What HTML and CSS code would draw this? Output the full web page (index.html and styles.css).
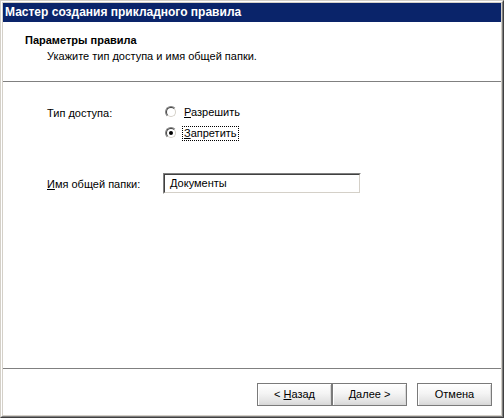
FILE: index.html
```html
<!DOCTYPE html>
<html lang="ru">
<head>
<meta charset="utf-8">
<title>Мастер создания прикладного правила</title>
<link rel="stylesheet" href="styles.css">
</head>
<body>
<div class="window">
  <div class="frame">
    <div class="titlebar">Мастер создания прикладного правила</div>
    <div class="client">
      <div class="header">
        <div class="h-title">Параметры правила</div>
        <div class="h-sub">Укажите тип доступа и имя общей папки.</div>
      </div>
      <div class="etch"></div>
      <div class="content">
        <div class="row row-access">
          <div class="label">Тип доступа:</div>
          <div class="radios">
            <div class="radio-item">
              <span class="radio"><span class="radio-in"></span></span>
              <span class="rlabel"><u>Р</u>азрешить</span>
            </div>
            <div class="radio-item">
              <span class="radio"><span class="radio-in"><span class="dot"></span></span></span>
              <span class="rlabel focus"><u>З</u>апретить</span>
            </div>
          </div>
        </div>
        <div class="row row-folder">
          <div class="label"><u>И</u>мя общей папки:</div>
          <div class="field"><div class="field-in">Документы</div></div>
        </div>
      </div>
      <div class="etch"></div>
      <div class="footer">
        <div class="btn"><span>&lt; <u>Н</u>азад</span></div>
        <div class="btn"><span><u>Д</u>алее &gt;</span></div>
        <div class="btn btn-cancel"><span>Отмена</span></div>
      </div>
    </div>
  </div>
</div>
</body>
</html>
```
FILE: styles.css
```css
* { box-sizing: border-box; }
html, body { margin: 0; padding: 0; }
body {
  width: 504px;
  height: 418px;
  font-family: "Liberation Sans", Arial, sans-serif;
  font-size: 11px;
  color: #000;
  background: #D4D0C8;
}
u { text-decoration: underline; text-underline-offset: 1px; }
.window {
  width: 504px;
  height: 418px;
  border: 1px solid;
  border-color: #D4D0C8 #404040 #404040 #D4D0C8;
}
.frame {
  height: 100%;
  border: 1px solid;
  border-color: #FFFFFF #808080 #808080 #FFFFFF;
  padding: 1px;
  background: #D4D0C8;
  display: flex;
  flex-direction: column;
}
.titlebar {
  height: 19px;
  background: #0A246A;
  color: #fff;
  font-weight: bold;
  font-size: 12px;
  line-height: 19px;
  padding-left: 2px;
  white-space: nowrap;
}
.client {
  flex: 1;
  background: #fff;
  display: flex;
  flex-direction: column;
}
.header {
  height: 59px;
  padding: 11px 0 0 22px;
}
.h-title { font-weight: bold; line-height: 14px; }
.h-sub { padding-left: 22px; line-height: 14px; margin-top: 2px; }
.etch {
  height: 2px;
  border-top: 1px solid #808080;
  border-bottom: 1px solid #fff;
}
.content {
  flex: 1;
  padding: 22px 0 0 44px;
}
.row { display: flex; }
.label { width: 116px; line-height: 14px; }
.row-access .label { padding-top: 1px; }
.radios { display: flex; flex-direction: column; gap: 7px; }
.radio-item { display: flex; align-items: center; height: 14px; padding-left: 2px; }
.radio {
  width: 12px;
  height: 12px;
  border-radius: 50%;
  border: 1px solid;
  border-color: #808080 #fff #fff #808080;
  margin-right: 5px;
}
.radio-in {
  display: flex;
  align-items: center;
  justify-content: center;
  width: 10px;
  height: 10px;
  border-radius: 50%;
  border: 1px solid;
  border-color: #404040 #D4D0C8 #D4D0C8 #404040;
  background: #fff;
}
.dot { width: 4px; height: 4px; border-radius: 50%; background: #000; }
.rlabel { line-height: 13px; padding: 0 1px; border: 1px solid transparent; }
.rlabel.focus { border: 1px dotted #000; }
.row-folder { margin-top: 33px; align-items: center; }
.field {
  width: 198px;
  height: 21px;
  border: 1px solid;
  border-color: #808080 #fff #fff #808080;
}
.field-in {
  height: 100%;
  border: 1px solid;
  border-color: #404040 #D4D0C8 #D4D0C8 #404040;
  padding-left: 5px;
  line-height: 17px;
}
.footer {
  height: 45px;
  display: flex;
  justify-content: flex-end;
  padding: 13px 9px 0 0;
}
.btn {
  width: 75px;
  height: 23px;
  border: 1px solid #7A7A7A;
  box-shadow: inset 1px 1px 0 #fff, inset -1px -1px 0 #d8d8d8;
  background: linear-gradient(#ffffff, #f4f4f4 45%, #e4e4e4 80%, #d8d8d8);
  display: flex;
  align-items: center;
  justify-content: center;
  line-height: 13px;
  white-space: pre;
}
.btn-cancel { margin-left: 10px; }
```
